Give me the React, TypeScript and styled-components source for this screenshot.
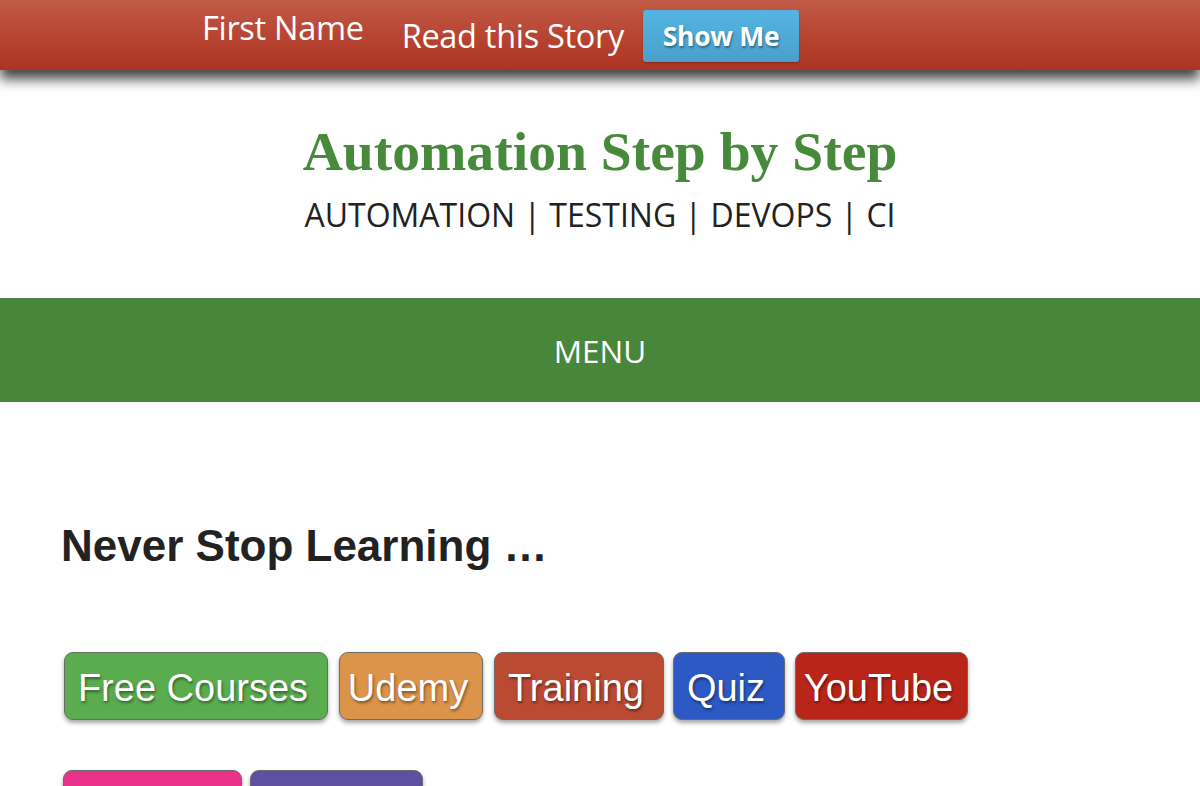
import React from "react";
import styled, { createGlobalStyle } from "styled-components";

const Global = createGlobalStyle`
  html, body { margin: 0; padding: 0; background: #fff; }
  body { font-family: "Open Sans", "Liberation Sans", sans-serif; overflow: hidden; }
  * { box-sizing: border-box; }
`;

const Page = styled.div`
  width: 1200px;
  height: 786px;
  overflow: hidden;
  position: relative;
`;

const TopBar = styled.div`
  height: 70px;
  background: linear-gradient(to bottom, #c15b47 0%, #b84533 50%, #ad3322 100%);
  box-shadow: 0 9px 12px rgba(0, 0, 0, 0.75);
  display: flex;
  align-items: flex-start;
  padding-left: 202px;
  position: relative;
  z-index: 2;
`;

const BarText = styled.span<{ $top: number; $left?: number }>`
  color: #fff;
  font-family: "Open Sans", sans-serif;
  font-size: 32.5px;
  line-height: 40px;
  margin-top: ${(p) => p.$top}px;
  margin-left: ${(p) => p.$left ?? 0}px;
  letter-spacing: -0.3px;
  white-space: nowrap;
`;

const ShowMe = styled.button`
  margin-top: 10px;
  margin-left: 19px;
  width: 156px;
  height: 52px;
  border: none;
  border-radius: 3px;
  background: linear-gradient(to bottom, #54b5e2 0%, #4a9fcc 100%);
  color: #fff;
  font-family: "Open Sans", sans-serif;
  font-weight: 700;
  font-size: 26.5px;
  letter-spacing: -0.3px;
  text-shadow: 1px 2px 2px rgba(0, 0, 0, 0.35);
  box-shadow: 0 1px 2px rgba(0, 0, 0, 0.25);
  padding: 0;
`;

const Branding = styled.header`
  height: 228px;
  display: flex;
  flex-direction: column;
  align-items: center;
  padding-top: 49px;
`;

const SiteTitle = styled.h1`
  margin: 0;
  font-family: "Liberation Serif", "Times New Roman", serif;
  font-weight: 700;
  font-size: 55.6px;
  line-height: 64px;
  color: #478a3c;
`;

const Tagline = styled.p`
  margin: 12px 0 0;
  font-family: "Open Sans", sans-serif;
  font-size: 32px;
  line-height: 40px;
  color: #222;
`;

const MenuBar = styled.nav`
  height: 104px;
  background: #47863b;
  display: flex;
  align-items: center;
  justify-content: center;
  color: #fff;
  font-family: "Open Sans", sans-serif;
  font-size: 31.5px;
`;

const Content = styled.main`
  padding: 116px 0 0 61px;
`;

const Heading = styled.h2`
  margin: 0;
  font-family: "Liberation Sans", Arial, sans-serif;
  font-weight: 700;
  font-size: 44px;
  line-height: 56px;
  color: #222;
`;

const ButtonRow = styled.div<{ $top: number; $left: number }>`
  display: flex;
  margin-top: ${(p) => p.$top}px;
  padding-left: ${(p) => p.$left}px;
`;

const Pill = styled.span<{ $bg: string; $w: number; $gap: number }>`
  display: flex;
  align-items: center;
  justify-content: center;
  width: ${(p) => p.$w}px;
  height: 68px;
  margin-right: ${(p) => p.$gap}px;
  background: ${(p) => p.$bg};
  border: 1px solid #6b6b6b;
  border-radius: 9px;
  box-shadow: 0 3px 4px rgba(0, 0, 0, 0.35);
  color: #fff;
  font-family: "Liberation Sans", Arial, sans-serif;
  font-size: 38px;
  text-shadow: 1px 2px 3px rgba(0, 0, 0, 0.45);
  padding: 4px 6px 0 0;
  white-space: nowrap;
`;

const row1 = [
  { label: "Free Courses", bg: "#5aad4e", w: 264, gap: 11 },
  { label: "Udemy", bg: "#dc944b", w: 144, gap: 11 },
  { label: "Training", bg: "#bb4a33", w: 170, gap: 9 },
  { label: "Quiz", bg: "#2c59c4", w: 112, gap: 10 },
  { label: "YouTube", bg: "#ba2519", w: 173, gap: 0 },
];

const row2 = [
  { label: "Blog", bg: "#e9318a", w: 179, gap: 8 },
  { label: "Contact", bg: "#5e4fa0", w: 173, gap: 0 },
];

export default function App() {
  return (
    <Page>
      <Global />
      <TopBar>
        <BarText $top={8}>First Name</BarText>
        <BarText $top={16} $left={38}>Read this Story</BarText>
        <ShowMe>Show Me</ShowMe>
      </TopBar>
      <Branding>
        <SiteTitle>Automation Step by Step</SiteTitle>
        <Tagline>AUTOMATION | TESTING | DEVOPS | CI</Tagline>
      </Branding>
      <MenuBar>MENU</MenuBar>
      <Content>
        <Heading>Never Stop Learning …</Heading>
        <ButtonRow $top={78} $left={3}>
          {row1.map((b) => (
            <Pill key={b.label} $bg={b.bg} $w={b.w} $gap={b.gap}>{b.label}</Pill>
          ))}
        </ButtonRow>
        <ButtonRow $top={50} $left={2}>
          {row2.map((b) => (
            <Pill key={b.label} $bg={b.bg} $w={b.w} $gap={b.gap}>{b.label}</Pill>
          ))}
        </ButtonRow>
      </Content>
    </Page>
  );
}
